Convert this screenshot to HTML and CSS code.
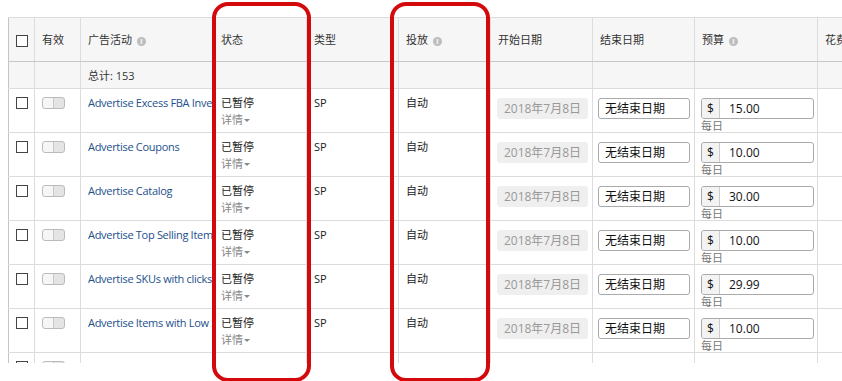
FILE: index.html
```html
<!DOCTYPE html>
<html lang="zh-CN">
<head>
    <meta charset="UTF-8">
    <title>广告活动</title>
    <link rel="stylesheet" href="styles.css">
</head>
<body>
    <div class="page">
        <div class="table-wrap">
            <table class="campaigns">
                <colgroup>
                    <col style="width: 26px">
                    <col style="width: 46px">
                    <col style="width: 133px">
                    <col style="width: 93px">
                    <col style="width: 92px">
                    <col style="width: 92px">
                    <col style="width: 102px">
                    <col style="width: 102px">
                    <col style="width: 123px">
                    <col style="width: 90px">
                </colgroup>
                <thead>
                    <tr>
                        <th><span class="check"></span></th>
                        <th>有效</th>
                        <th>广告活动 <span class="info">i</span></th>
                        <th>状态</th>
                        <th>类型</th>
                        <th>投放 <span class="info">i</span></th>
                        <th>开始日期</th>
                        <th>结束日期</th>
                        <th>预算 <span class="info">i</span></th>
                        <th>花费</th>
                    </tr>
                </thead>
                <tbody>
                    <tr class="total">
                        <td></td>
                        <td></td>
                        <td>总计: 153</td>
                        <td></td><td></td><td></td><td></td><td></td><td></td><td></td>
                    </tr>
                </tbody>
                <tbody id="rows"></tbody>
                <tbody>
                    <!-- next row, only its top edge is in view -->
                    <tr>
                        <td><span class="check"></span></td>
                        <td><span class="toggle"></span></td>
                        <td></td><td></td><td></td><td></td><td></td><td></td><td></td><td></td>
                    </tr>
                </tbody>
            </table>
        </div>

        <!-- highlight boxes -->
        <div class="mark mark-status"></div>
        <div class="mark mark-target"></div>
    </div>

    <script>
        const campaigns = [
            { name: 'Advertise Excess FBA Inventory', budget: '15.00' },
            { name: 'Advertise Coupons', budget: '10.00' },
            { name: 'Advertise Catalog', budget: '30.00' },
            { name: 'Advertise Top Selling Items', budget: '10.00' },
            { name: 'Advertise SKUs with clicks', budget: '29.99' },
            { name: 'Advertise Items with Low Sales', budget: '10.00' }
        ];

        const tbody = document.getElementById('rows');
        tbody.innerHTML = campaigns.map(c => `
            <tr>
                <td><span class="check"></span></td>
                <td><span class="toggle"></span></td>
                <td class="name"><a href="#">${c.name}</a></td>
                <td>已暂停<div class="details">详情 <span class="caret"></span></div></td>
                <td>SP</td>
                <td>自动</td>
                <td><div class="date-box">2018年7月8日</div></td>
                <td><div class="end-box">无结束日期</div></td>
                <td>
                    <div class="budget"><span class="cur">$</span><span class="amt">${c.budget}</span></div>
                    <div class="daily">每日</div>
                </td>
                <td></td>
            </tr>`).join('');
    </script>
</body>
</html>
```

FILE: styles.css
```css
html, body {
    margin: 0;
    background: #fff;
    overflow: hidden;
}
body {
    font-family: "Open Sans", "Noto Sans CJK SC", sans-serif;
    font-size: 11px;
    color: #222;
}
.page {
    position: relative;
    width: 842px;
    height: 381px;
    padding: 17px 0 0 8px;
    box-sizing: border-box;
}
.table-wrap {
    height: 346px;
    overflow: hidden;
    width: 900px;
}
.campaigns {
    border-collapse: collapse;
    table-layout: fixed;
    width: 899px;
}
.campaigns th,
.campaigns td {
    border: 1px solid #dcdcdc;
    padding: 5px 7px 0 7px;
    line-height: 17px;
    text-align: left;
    vertical-align: top;
    white-space: nowrap;
    overflow: hidden;
}
.campaigns th:first-child,
.campaigns td:first-child {
    border-left-color: #c4c4c4;
    padding: 0;
    text-align: center;
}
.campaigns thead th {
    height: 43px;
    padding-top: 0;
    vertical-align: middle;
    font-weight: normal;
    color: #333;
    background: #f6f6f6;
    border-bottom: 1px solid #c8c8c8;
}
.campaigns tbody tr td {
    height: 38px;
}
.campaigns tr.total td {
    height: 26px;
    padding-top: 0;
    vertical-align: middle;
    background: #f6f6f6;
    color: #333;
}
.info {
    display: inline-block;
    width: 9px;
    height: 9px;
    border-radius: 50%;
    background: #bdbdbd;
    color: #fff;
    font-size: 7px;
    line-height: 9px;
    text-align: center;
    font-weight: bold;
    vertical-align: 0;
    margin-left: 2px;
}
.check {
    display: inline-block;
    width: 10px;
    height: 10px;
    border: 1.5px solid #444;
    background: #fff;
    margin-top: 8px;
    vertical-align: top;
}
thead .check {
    margin-top: 0;
    vertical-align: middle;
}
.toggle {
    position: relative;
    display: inline-block;
    width: 21px;
    height: 10px;
    border: 1px solid #bbb;
    border-radius: 3px;
    background: linear-gradient(to right, #f6f6f6 50%, #e4e4e4 50%);
    margin: 3px 0 0 0;
    vertical-align: top;
}
.toggle::after {
    content: "";
    position: absolute;
    left: 10px;
    top: 0;
    bottom: 0;
    width: 1px;
    background: #c8c8c8;
}
.name {
    text-overflow: clip;
}
.name a {
    color: #24508c;
    text-decoration: none;
    letter-spacing: -0.3px;
}
.details {
    color: #888;
}
.caret {
    display: inline-block;
    border-left: 3px solid transparent;
    border-right: 3px solid transparent;
    border-top: 3px solid #888;
    vertical-align: 2px;
    margin-left: -2px;
}
.date-box {
    width: 91px;
    height: 21px;
    line-height: 21px;
    margin: 4px 0 0 -1px;
    background: #efefef;
    border-radius: 3px;
    color: #999;
    font-size: 12px;
    text-align: center;
}
.end-box {
    width: 84px;
    height: 19px;
    line-height: 19px;
    margin: 4px 0 0 -2px;
    padding-left: 6px;
    border: 1px solid #aaa;
    border-radius: 3px;
    color: #111;
    font-size: 12px;
}
.budget {
    display: flex;
    width: 111px;
    height: 19px;
    margin: 4px 0 0 -1px;
    border: 1px solid #aaa;
    border-radius: 3px;
    font-size: 12px;
    line-height: 19px;
    color: #111;
}
.budget .cur {
    width: 17px;
    text-align: center;
    background: #f3f3f3;
    border-right: 1px solid #ccc;
    border-radius: 3px 0 0 3px;
}
.budget .amt {
    padding-left: 9px;
}
.daily {
    color: #777;
    line-height: 13px;
    margin-left: -1px;
}
.mark {
    position: absolute;
    top: 2px;
    height: 372px;
    border: 4px solid #d4090c;
    border-radius: 16px;
}
.mark-status {
    left: 212px;
    width: 91px;
}
.mark-target {
    left: 390px;
    width: 92px;
}
```
